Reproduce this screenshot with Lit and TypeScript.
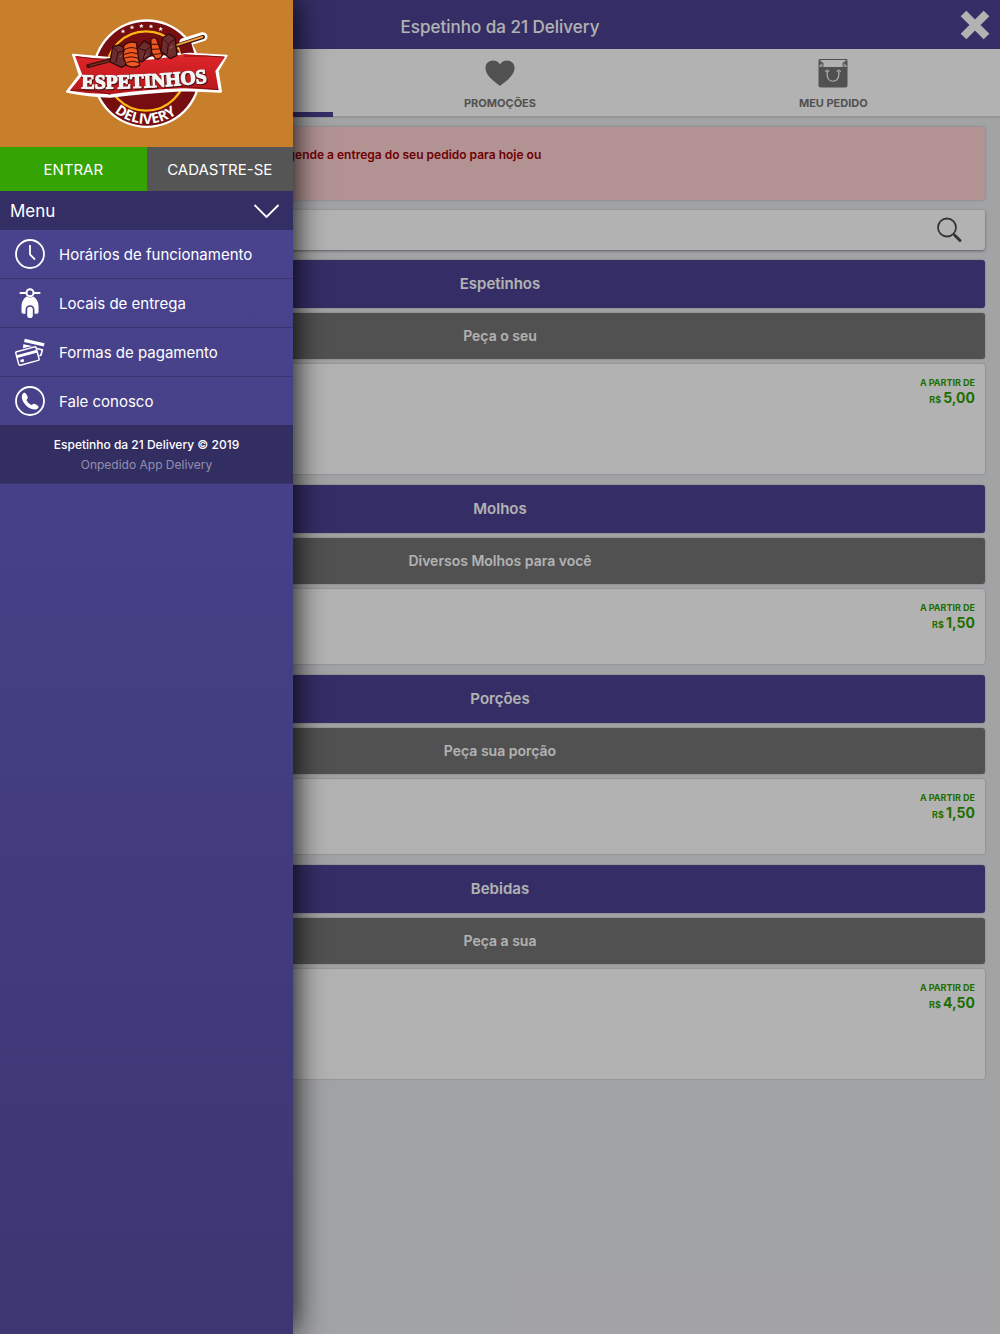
import { LitElement, html, css, svg } from "lit";
import { customElement, property } from "lit/decorators.js";

interface Category {
  title: string;
  note: string;
  price: string;
  tall: boolean;
}

const CATEGORIES: Category[] = [
  { title: "Espetinhos", note: "Peça o seu", price: "5,00", tall: true },
  { title: "Molhos", note: "Diversos Molhos para você", price: "1,50", tall: false },
  { title: "Porções", note: "Peça sua porção", price: "1,50", tall: false },
  { title: "Bebidas", note: "Peça a sua", price: "4,50", tall: true },
];

const clockIcon = html`<svg class="icon" viewBox="0 0 30 30" aria-hidden="true">
  <circle cx="15" cy="15" r="14" fill="none" stroke="currentColor" stroke-width="1.8" />
  <path d="M15 6v9.5l5 5" fill="none" stroke="currentColor" stroke-width="1.8" />
</svg>`;

const scooterIcon = html`<svg class="icon" viewBox="0 0 30 30" aria-hidden="true">
  <path d="M5.500 5h5M19.500 5h5" stroke="currentColor" stroke-width="2.200" stroke-linecap="round" />
  <circle cx="15" cy="4.700" r="3.500" fill="none" stroke="currentColor" stroke-width="2" />
  <path
    d="M11.500 8.500Q15 10.300 18.500 8.500C21.500 10.500 23.500 14 23.500 18V24Q23.500 25.800 21.700 25.800H19.500V22C19.500 19.200 17.800 17.300 15 17.300S10.500 19.200 10.500 22V25.800H8.300Q6.500 25.800 6.500 24V18C6.500 14 8.500 10.500 11.500 8.500Z"
    fill="currentColor"
  />
  <rect x="12.200" y="18.700" width="5.600" height="11.300" rx="2.800" fill="currentColor" />
</svg>`;

const cardsIcon = html`<svg class="icon" viewBox="0 0 30 30" aria-hidden="true">
  <path d="M9.800 1.800L29.500 6.300L28.800 9.500L9 4.900Z" fill="currentColor" />
  <path d="M8.300 8L9.200 7.800L28.300 12.200L26.700 18.800L24.500 19.400L24.200 17.900L25.300 17.500L26.300 13.500L22.600 12.600L21.300 10.700Z" fill="currentColor" />
  <path d="M8.300 7.300L17 9L8 11.300Z" fill="currentColor" />
  <g transform="rotate(-15 12.500 18.500)">
    <rect x="1.800" y="12" width="21" height="14" rx="1.200" fill="none" stroke="currentColor" stroke-width="1.500" />
    <path d="M2 16.800H23" stroke="currentColor" stroke-width="2.800" />
    <rect x="4.300" y="20.800" width="3.500" height="2.700" rx=".5" fill="currentColor" />
  </g>
</svg>`;

const phoneIcon = html`<svg class="icon" viewBox="0 0 30 30" aria-hidden="true">
  <circle cx="15" cy="15" r="14" fill="none" stroke="currentColor" stroke-width="1.800" />
  <path
    d="M8.200 7.300C9.200 6.500 10.300 6.700 11 7.800L12.500 10.500C13.100 11.700 12.600 12.400 11.900 13.300C11.400 14 11.600 14.500 12.200 15.400C13.100 16.700 14.200 17.800 15.500 18.600C16.300 19 16.800 19 17.400 18.500C18.300 17.800 19 17.400 20.100 18L22.600 19.500C23.700 20.200 23.800 21.200 23 22.200C21.500 24 18.500 23.900 15.500 22.500C12 20.800 9.300 18.100 7.800 14.900C6.500 12.200 6.200 9 8.200 7.300Z"
    fill="currentColor"
  />
</svg>`;

const MENU = [
  { label: "Horários de funcionamento", icon: clockIcon },
  { label: "Locais de entrega", icon: scooterIcon },
  { label: "Formas de pagamento", icon: cardsIcon },
  { label: "Fale conosco", icon: phoneIcon },
];

const STARS = [
  [216, 78],
  [243, 66],
  [271, 62],
  [300, 63],
  [329, 71],
];

@customElement("brand-logo")
export class BrandLogo extends LitElement {
  static styles = css`
    :host {
      display: block;
    }
    .logo {
      display: block;
      width: 100%;
    }
    .name {
      font: bold 59px "Liberation Serif", serif;
      filter: drop-shadow(0 0 2px #4a0a0b) drop-shadow(2px 3px 1px #4a0a0b);
    }
    .tag {
      font: bold 43px "Open Sans", sans-serif;
    }
  `;

  render() {
    return html`<svg class="logo" viewBox="45 38 486 334" role="img" aria-label="Espetinhos Delivery">
      <defs>
        <linearGradient id="ribbon" x1="0" y1="0" x2="0" y2="1">
          <stop offset="0" stop-color="#e0262a" />
          <stop offset="1" stop-color="#b5171b" />
        </linearGradient>
        <path id="arc" d="M190 320A150 150 0 0 0 410 291" />
        <path id="rise" d="M92 249Q285 254 520 226" />
      </defs>
      <circle cx="287" cy="205" r="163" fill="#fff" />
      <circle cx="287" cy="205" r="156" fill="#760e10" />
      <circle cx="285" cy="197" r="119" fill="#760e10" stroke="#fdb813" stroke-width="7" />
      <path
        d="M66 148L178 158Q290 166 390 144L527 151L500 197L510 259L400 255Q280 262 178 274Q115 272 48 259L86 209Z"
        fill="#fff"
        stroke="#fff"
        stroke-width="6"
        stroke-linejoin="round"
      />
      <path d="M72 152L180 164Q290 172 400 146L522 155L493 197L503 254L400 249Q285 252 178 267Q115 266 56 256L94 209Z" fill="url(#ribbon)" />
      <path d="M76 154Q140 164 182 160M375 243Q440 246 502 253M60 255Q130 252 178 267M400 152Q465 150 520 155" fill="none" stroke="#7b1012" stroke-width="3" />
      <text class="name" fill="#f4f4f4" stroke="#f4f4f4" stroke-width="4" stroke-linejoin="round">
        <textPath href="#rise">ESPETINHOS</textPath>
      </text>
      <text class="tag" fill="#fff"><textPath href="#arc">DELIVERY</textPath></text>
      ${STARS.map(
        ([x, y]) => svg`<path
          transform="translate(${x} ${y})"
          d="M0-7L2-2L7-2L3 1L5 6L0 3L-5 6L-3 1L-7-2L-2-2Z" fill="#fff" />`
      )}
      <path d="M398 112L456 94" stroke="#fff" stroke-width="27" stroke-linecap="round" />
      <path d="M384 122L420 110L428 138L390 146Z" fill="#760e10" />
      <path d="M112 182L185 163M360 126L456 95" stroke="#43100f" stroke-width="12" stroke-linecap="round" />
      <path d="M116 181L185 164" stroke="#8a3b16" stroke-width="3" />
      <path d="M362 124L454 95" stroke="#e8a33a" stroke-width="6" stroke-linecap="round" />
      <g stroke="#35090b" stroke-width="4" stroke-linejoin="round">
        <path d="M185 124L203 119L222 127L226 178L211 186L177 170Z" fill="#6d2d2e" />
        <path d="M262 126L280 106L302 121L300 150L272 170L252 155Z" fill="#6d2d2e" />
        <path d="M218 121Q234 106 256 112L266 180Q249 190 228 181L217 157Z" fill="#f0581d" />
        <path d="M299 102Q309 92 317 101L334 150Q328 164 313 160L302 142Z" fill="#f0581d" />
        <path d="M334 98L353 86L372 97L378 150L358 160L330 138Z" fill="#6d2d2e" />
      </g>
      <g fill="none" stroke="#35090b" stroke-width="3">
        <path d="M187 127L201 142L222 136M201 142L194 172M266 130L284 136L299 124M284 136L276 164M338 102L352 116L371 102M352 116L348 148" />
        <path d="M218 134Q238 122 258 130M220 147Q240 137 260 145M219 159Q242 150 263 160M228 171Q246 163 264 172M302 117L321 117M303 132L326 131M308 147L331 145" />
      </g>
      <path d="M206 154L212 151M281 154L287 148M357 129L366 122" stroke="#b46b66" stroke-width="3" />
    </svg>`;
  }
}

@customElement("category-section")
export class CategorySection extends LitElement {
  @property({ attribute: false }) category!: Category;

  static styles = css`
    :host {
      display: flex;
      flex-direction: column;
      gap: 5px;
    }
    .title,
    .note,
    .card {
      box-sizing: border-box;
      margin: 0;
      border-radius: 3px;
      box-shadow: 0 0 2px rgba(0, 0, 0, 0.3);
    }
    .title {
      background: #4c4392;
      color: #fff;
      font-size: 15px;
      line-height: 48px;
      font-weight: 600;
      text-align: center;
    }
    .note {
      background: #757575;
      color: #fff;
      font-size: 14px;
      line-height: 46px;
      font-weight: 600;
      text-align: center;
    }
    .card {
      display: flex;
      flex-direction: column;
      align-items: flex-end;
      min-height: 75px;
      padding: 12px 10px;
      background: #fff;
      color: #2f9e00;
      font-weight: 700;
      text-transform: uppercase;
    }
    .tall {
      min-height: 110px;
    }
    .from,
    .currency {
      font-size: 9px;
    }
    .from {
      line-height: 14px;
    }
    .amount {
      font-size: 14px;
      line-height: 16px;
    }
  `;

  render() {
    const c = this.category;
    return html`
      <h2 class="title">${c.title}</h2>
      <p class="note">${c.note}</p>
      <div class="card ${c.tall ? "tall" : ""}">
        <span class="from">A partir de</span>
        <span class="amount"><span class="currency">R$ </span>${c.price}</span>
      </div>
    `;
  }
}

@customElement("side-drawer")
export class SideDrawer extends LitElement {
  static styles = css`
    :host {
      display: flex;
      flex-direction: column;
      background: linear-gradient(#4c4694, #3c3672);
      color: #fff;
      box-shadow: 0 0 30px #000;
    }
    .brand {
      display: flex;
      align-items: center;
      justify-content: center;
      height: 147px;
      background: #c77f2c;
    }
    .mark {
      width: 162px;
    }
    .account {
      display: grid;
      grid-template-columns: 1fr 1fr;
    }
    .button {
      border: 0;
      padding: 0;
      height: 44px;
      font: inherit;
      font-size: 15px;
      color: #fff;
      background: #555;
    }
    .primary {
      background: #35a304;
    }
    .toggle {
      display: flex;
      align-items: center;
      justify-content: space-between;
      height: 39px;
      border: 0;
      padding: 0 13px 0 10px;
      background: #332e64;
      color: #fff;
      font: inherit;
      font-size: 17px;
    }
    .chevron {
      width: 27px;
      height: 16px;
    }
    .list {
      list-style: none;
      margin: 0;
      padding: 0;
    }
    .item + .item {
      border-top: 1px solid #393371;
    }
    .link {
      display: flex;
      align-items: center;
      gap: 14px;
      height: 48px;
      padding: 0 15px;
      color: #fff;
      text-decoration: none;
      font-size: 15px;
    }
    .icon {
      width: 30px;
      height: 30px;
      flex: none;
    }
    .foot {
      padding: 10px 10px 8px;
      background: #332e62;
      border-bottom: 1px solid #393371;
      text-align: center;
      font-size: 12px;
      line-height: 20px;
    }
    .line {
      margin: 0;
    }
    .strong {
      font-weight: 500;
    }
    .soft {
      color: #918fae;
    }
  `;

  render() {
    return html`
      <div class="brand"><brand-logo class="mark"></brand-logo></div>
      <div class="account">
        <button class="button primary" type="button">ENTRAR</button>
        <button class="button" type="button">CADASTRE-SE</button>
      </div>
      <button class="toggle" type="button" aria-expanded="true">
        Menu
        <svg class="chevron" viewBox="0 0 27 16" aria-hidden="true">
          <path d="M1.500 2L13.500 14L25.500 2" fill="none" stroke="currentColor" stroke-width="1.800" />
        </svg>
      </button>
      <ul class="list">
        ${MENU.map((m) => html`<li class="item"><a class="link" href="#">${m.icon}<span>${m.label}</span></a></li>`)}
      </ul>
      <footer class="foot">
        <p class="line strong">Espetinho da 21 Delivery © 2019</p>
        <p class="line soft">Onpedido App Delivery</p>
      </footer>
    `;
  }
}

@customElement("app-root")
export class AppRoot extends LitElement {
  static styles = css`
    :host {
      display: block;
      position: relative;
      min-height: 100vh;
      background: #e9eaed;
      font-family: Inter, "Liberation Sans", sans-serif;
    }
    .top {
      display: grid;
      grid-template-columns: 1fr auto 1fr;
      align-items: center;
      height: 49px;
      padding: 0 10px;
      background: #4c4392;
      color: #fff;
    }
    .heading {
      grid-column: 2;
      margin: 0;
      padding-top: 4px;
      font-size: 17px;
      line-height: 24px;
      font-weight: 500;
    }
    .close {
      justify-self: end;
      display: flex;
      border: 0;
      padding: 0;
      background: none;
      color: #fff;
    }
    .cross,
    .tab-icon {
      width: 30px;
      height: 30px;
    }
    .tabs {
      display: grid;
      grid-template-columns: repeat(3, 1fr);
      height: 67px;
      background: #fff;
      border-bottom: 2px solid #d7d7d9;
    }
    .tab {
      display: flex;
      flex-direction: column;
      align-items: center;
      gap: 6px;
      padding-top: 9px;
      color: #757575;
      font-size: 11px;
      line-height: 18px;
      font-weight: 700;
      text-decoration: none;
    }
    .active {
      border-bottom: 5px solid #4c4392;
      margin-bottom: -1px;
    }
    .content {
      display: flex;
      flex-direction: column;
      gap: 10px;
      padding: 9px 15px 40px;
    }
    .alert {
      box-sizing: border-box;
      min-height: 73px;
      margin: 0;
      padding: 19px 15px 18px 264px;
      border-radius: 3px;
      background: #ffd1d1;
      box-shadow: 0 0 3px rgba(0, 0, 0, 0.25);
      color: #a00006;
      font-size: 12px;
      line-height: 18px;
      font-weight: 600;
    }
    .search {
      display: flex;
      align-items: center;
      height: 40px;
      padding-right: 20px;
      border-radius: 3px;
      background: #fff;
      box-shadow: 0 1px 3px rgba(0, 0, 0, 0.45);
    }
    .field {
      flex: 1;
      min-width: 0;
      height: 100%;
      box-sizing: border-box;
      border: 0;
      padding: 0 12px;
      background: none;
      font: inherit;
      font-size: 14px;
      outline: 0;
    }
    .go {
      display: flex;
      border: 0;
      padding: 0;
      background: none;
      color: #4d4d4d;
    }
    .sections {
      display: flex;
      flex-direction: column;
      gap: 11px;
    }
    .shade {
      position: absolute;
      inset: 0;
      background: rgba(0, 0, 0, 0.3);
      pointer-events: none;
    }
    .drawer {
      position: absolute;
      top: 0;
      bottom: 0;
      left: 0;
      width: 293px;
    }
    .clip {
      position: absolute;
      inset: 0;
      overflow: hidden;
      pointer-events: none;
    }
    .clip > * {
      pointer-events: auto;
    }
  `;

  render() {
    return html`
      <header class="top">
        <h1 class="heading">Espetinho da 21 Delivery</h1>
        <button class="close" type="button" aria-label="Fechar">
          <svg class="cross" viewBox="0 0 30 30" aria-hidden="true">
            <path d="M3.500 3.500L26.500 26.500M26.500 3.500L3.500 26.500" stroke="currentColor" stroke-width="8" />
          </svg>
        </button>
      </header>
      <nav class="tabs">
        <a class="tab active" href="#" aria-label="Início"></a>
        <a class="tab" href="#">
          <svg class="tab-icon" viewBox="0 0 30 30" aria-hidden="true">
            <path
              d="M15 28C12 25 1 19 .5 10.500C.200 5.500 4 2.500 8 2.500C11 2.500 13.500 4 15 6.500C16.500 4 19 2.500 22 2.500C26 2.500 29.800 5.500 29.500 10.500C29 19 18 25 15 28Z"
              fill="currentColor"
            />
          </svg>
          PROMOÇÕES
        </a>
        <a class="tab" href="#">
          <svg class="tab-icon" viewBox="0 0 30 30" aria-hidden="true">
            <path d="M1 9V1.500H29V9" fill="none" stroke="currentColor" stroke-width="1" />
            <path d="M1 2.500L4.500 5L1 8ZM29 2.500L25.500 5L29 8Z" fill="currentColor" />
            <path d="M1.500 2L5 5L3 9M5 5V9M28.500 2L25 5L27 9M25 5V9" fill="none" stroke="currentColor" stroke-width=".8" />
            <path d="M.5 9H29.500V27.500Q29.500 29.500 27.500 29.500H2.500Q.5 29.500 .5 27.500Z" fill="currentColor" />
            <path d="M7.500 14Q7.500 12 9.200 12Q11 12 11 14M19 14Q19 12 20.800 12Q22.500 12 22.500 14" fill="none" stroke="#fff" />
            <path d="M9.200 13V17C9.200 25.300 20.800 25.300 20.800 17V13" fill="none" stroke="#fff" stroke-width="1.200" />
          </svg>
          MEU PEDIDO
        </a>
      </nav>
      <main class="content">
        <p class="alert">Agende a entrega do seu pedido para hoje ou</p>
        <form class="search" role="search">
          <input class="field" type="search" aria-label="Buscar" />
          <button class="go" type="button" aria-label="Buscar">
            <svg class="tab-icon" viewBox="0 0 30 30" aria-hidden="true">
              <circle cx="12" cy="12.500" r="9" fill="none" stroke="currentColor" stroke-width="1.800" />
              <path d="M18.500 19L20 20.500" stroke="currentColor" stroke-width="2" />
              <path d="M20 20.500L25 25.500" stroke="currentColor" stroke-width="3" stroke-linecap="round" />
            </svg>
          </button>
        </form>
        <div class="sections">
          ${CATEGORIES.map((c) => html`<category-section .category=${c}></category-section>`)}
        </div>
      </main>
      <div class="shade"></div>
      <div class="clip"><side-drawer class="drawer"></side-drawer></div>
    `;
  }
}
